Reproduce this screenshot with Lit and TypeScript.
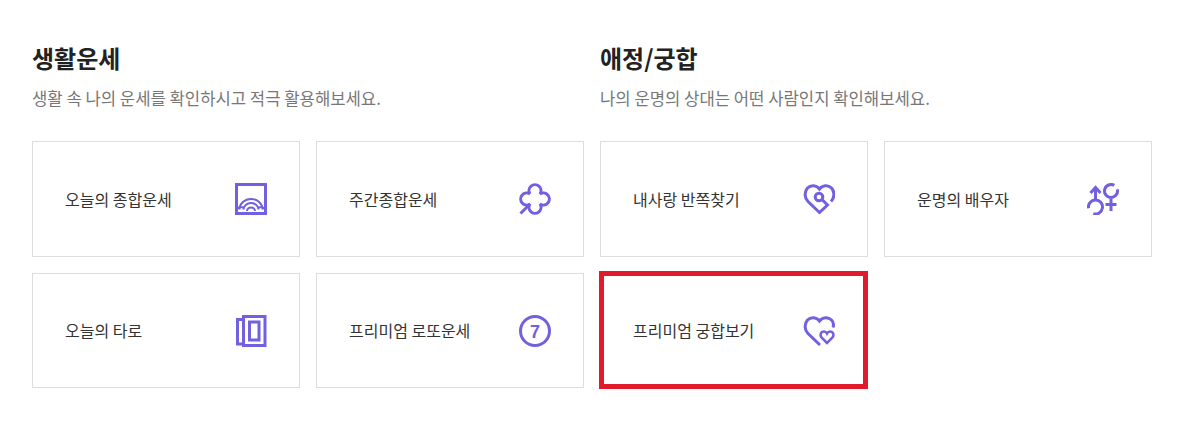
import { LitElement, html, css, svg } from "lit";
import { customElement } from "lit/decorators.js";

const icons = {
  sea: svg`<rect x="1.500" y="1.500" width="29" height="29"/>
    <path d="M4.500 26.500A11.500 10.500 0 0 1 27.500 26.500M8.500 26.500A7.500 6.500 0 0 1 23.500 26.500M12 28A4 3.500 0 0 1 20 28M2 26C4 24 6 23.500 8 24.500M30 26C28 24 26 23.500 24 24.500" stroke-width="2"/>`,
  clover: svg`<path d="M11 11A6 6 0 1 1 21 11A6 6 0 1 1 21 21A6 6 0 1 1 11 21A6 6 0 1 1 11 11"/>
    <path d="M1.500 30.500L11 21"/>`,
  heartKey: svg`<path d="M28 18.500C31.500 15 32 9 28.500 5C25 1.500 19.500 2 16.500 6C13.500 2 8 1.500 4.500 5C1 9 1.500 15 5 18.500L16.500 29.500L24.500 22L19.500 17"/>
    <circle cx="16" cy="14" r="3.800"/>`,
  gender: svg`<path d="M8.500 17V5M3.500 10L8.500 4.500L13.500 10"/>
    <path d="M1.600 25.200A7 7 0 1 1 6.300 30.600"/>
    <path d="M27.250 2.370A6.500 6.500 0 1 0 30.280 6.320M24 14.500V28M18.500 21.500H29.500"/>`,
  cards: svg`<path d="M8 4.500H2.500V29H8"/><rect x="8.500" y="1.500" width="21.500" height="29"/><rect x="14.500" y="7" width="9.500" height="18"/>`,
  lotto: svg`<circle cx="16" cy="16" r="14.500"/><text x="16" y="22.500" class="num">7</text>`,
  hearts: svg`<path d="M30 12.500C31 9.500 30.500 7 28.500 5C25 1.500 19.500 2 16.500 6C13.500 2 8 1.500 4.500 5C1 9 1.500 15 5 18.500L17 30"/>
    <path d="M24 28L18.500 22.500C16.500 20 18 16.500 21 16.500C22.500 16.500 23.500 17.500 24 18.500C24.500 17.500 25.500 16.500 27 16.500C30 16.500 31.500 20 29.500 22.500Z" stroke-width="2.500"/>`,
};

type Item = { label: string; icon: keyof typeof icons; marked?: boolean };

const sections: { title: string; desc: string; items: Item[] }[] = [
  {
    title: "생활운세",
    desc: "생활 속 나의 운세를 확인하시고 적극 활용해보세요.",
    items: [
      { label: "오늘의 종합운세", icon: "sea" },
      { label: "주간종합운세", icon: "clover" },
      { label: "오늘의 타로", icon: "cards" },
      { label: "프리미엄 로또운세", icon: "lotto" },
    ],
  },
  {
    title: "애정/궁합",
    desc: "나의 운명의 상대는 어떤 사람인지 확인해보세요.",
    items: [
      { label: "내사랑 반쪽찾기", icon: "heartKey" },
      { label: "운명의 배우자", icon: "gender" },
      { label: "프리미엄 궁합보기", icon: "hearts", marked: true },
    ],
  },
];

@customElement("app-root")
export class AppRoot extends LitElement {
  static styles = css`
    :host {
      display: block;
      background: #fff;
      font-family: "Noto Sans CJK KR", "Noto Sans", sans-serif;
    }

    .page {
      display: grid;
      grid-template-columns: 552px 552px;
      gap: 16px;
      padding: 40px 41px 48px 32px;
    }

    h2 {
      margin: 0;
      font-size: 24px;
      line-height: 36px;
      font-weight: 700;
      color: #222;
    }

    p {
      margin: 10px 0 31px;
      font-size: 16.67px;
      line-height: 24px;
      color: #777;
    }

    .cards {
      display: grid;
      grid-template-columns: 268px 268px;
      grid-auto-rows: 115.5px;
      gap: 16px;
    }

    .card {
      position: relative;
      display: flex;
      align-items: center;
      justify-content: space-between;
      padding: 0 32px;
      border: 1px solid #ddd;
      font-size: 16px;
      color: #333;
    }

    .card.marked::after {
      content: "";
      position: absolute;
      inset: -2.5px -1px -2px -2px;
      border: 5px solid #e21b2c;
    }

    svg {
      width: 32px;
      height: 32px;
      fill: none;
      stroke: #7160e0;
      stroke-width: 3;
    }

    .card:nth-child(n + 3) svg {
      margin-top: 2px;
    }

    .num {
      font-family: "Liberation Sans", sans-serif;
      font-size: 18px;
      font-weight: 700;
      text-anchor: middle;
      fill: #7160e0;
      stroke: none;
    }
  `;

  render() {
    return html`
      <div class="page">
        ${sections.map(
          (s) => html`
            <section>
              <h2>${s.title}</h2>
              <p>${s.desc}</p>
              <div class="cards">
                ${s.items.map(
                  (item) => html`
                    <div class="card ${item.marked ? "marked" : ""}">
                      <span>${item.label}</span>
                      <svg viewBox="0 0 32 32">${icons[item.icon]}</svg>
                    </div>
                  `
                )}
              </div>
            </section>
          `
        )}
      </div>
    `;
  }
}
